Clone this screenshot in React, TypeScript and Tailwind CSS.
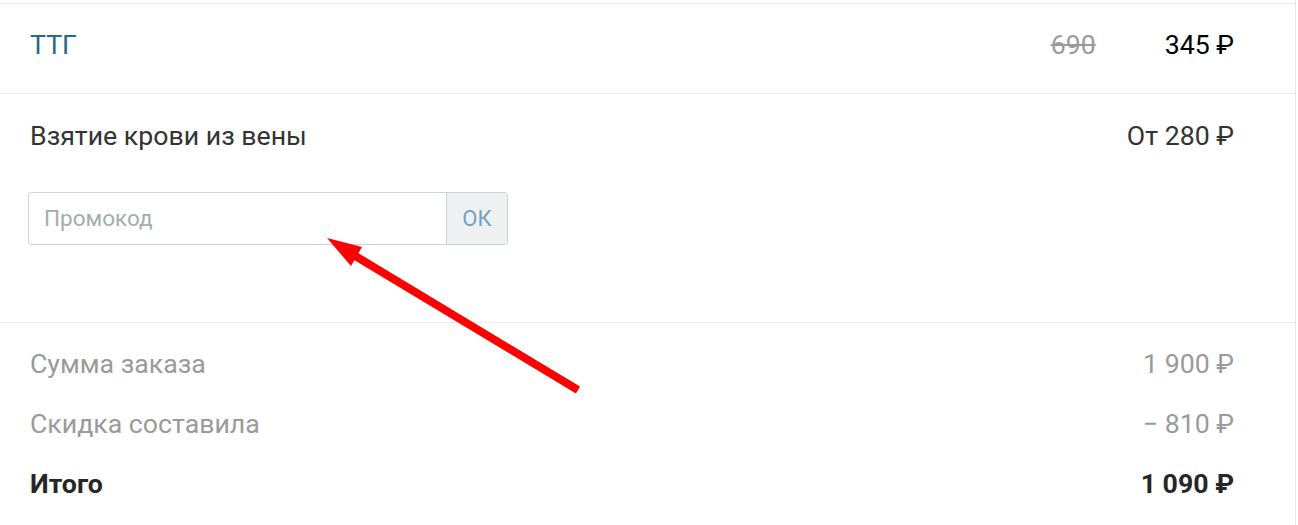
import React from 'react';

const font = { fontFamily: 'Roboto, "Noto Sans", sans-serif' };

const SummaryRow: React.FC<{ label: string; value: string; bold?: boolean }> = ({ label, value, bold }) => (
  <div
    className={`flex items-center justify-between h-[60px] text-[26.7px] leading-[32px] ${
      bold ? 'font-bold text-[#262626]' : 'text-[#9a9a9a]'
    }`}
  >
    <span>{label}</span>
    <span>{value}</span>
  </div>
);

const App: React.FC = () => {
  return (
    <div className="relative w-[1298px] h-[525px] bg-white overflow-hidden" style={font}>
      <div className="w-[1296px] h-full pt-[3px] border-r border-[#e6e6e6]">
        {/* Product row */}
        <div className="flex items-center justify-between border-t border-[#ececec] pl-[30px] pr-[61px] pt-[25px] pb-[32px]">
          <span className="text-[26.7px] leading-[32px] text-[#236b8a]">ТТГ</span>
          <div className="flex items-center text-[26.7px] leading-[32px]">
            <span className="text-[#9a9a9a] line-through">690</span>
            <span className="ml-[69px] text-black">345 ₽</span>
          </div>
        </div>

        {/* Blood draw + promo */}
        <div className="border-t border-[#ececec] pl-[30px] pr-[61px] pt-[26px] pb-[77px]">
          <div className="flex items-center justify-between text-[26.7px] leading-[32px] text-[#333333]">
            <span>Взятие крови из вены</span>
            <span>От 280 ₽</span>
          </div>
          <div className="mt-[40px] -ml-[2px] flex w-[480px] h-[53px] border border-[#cfd4d6] rounded-[3px] overflow-hidden">
            <input
              placeholder="Промокод"
              className="flex-1 min-w-0 px-[15px] text-[22.5px] text-[#333] placeholder:text-[#a5acaf] outline-none"
            />
            <button className="w-[61px] border-l border-[#cfd4d6] bg-[#eef1f2] text-[22px] text-[#7aa0b8]">
              ОК
            </button>
          </div>
        </div>

        {/* Summary */}
        <div className="border-t border-[#ececec] pl-[30px] pr-[61px] pt-[11px]">
          <SummaryRow label="Сумма заказа" value="1 900 ₽" />
          <SummaryRow label="Скидка составила" value="− 810 ₽" />
          <SummaryRow label="Итого" value="1 090 ₽" bold />
        </div>
      </div>

      {/* Red annotation arrow */}
      <svg className="absolute left-0 top-0 pointer-events-none" width="1298" height="525">
        <line x1="578" y1="390" x2="352" y2="254" stroke="#ff0000" strokeWidth="8" />
        <polygon points="327,238 362,247 351,266" fill="#ff0000" />
      </svg>
    </div>
  );
};

export default App;
